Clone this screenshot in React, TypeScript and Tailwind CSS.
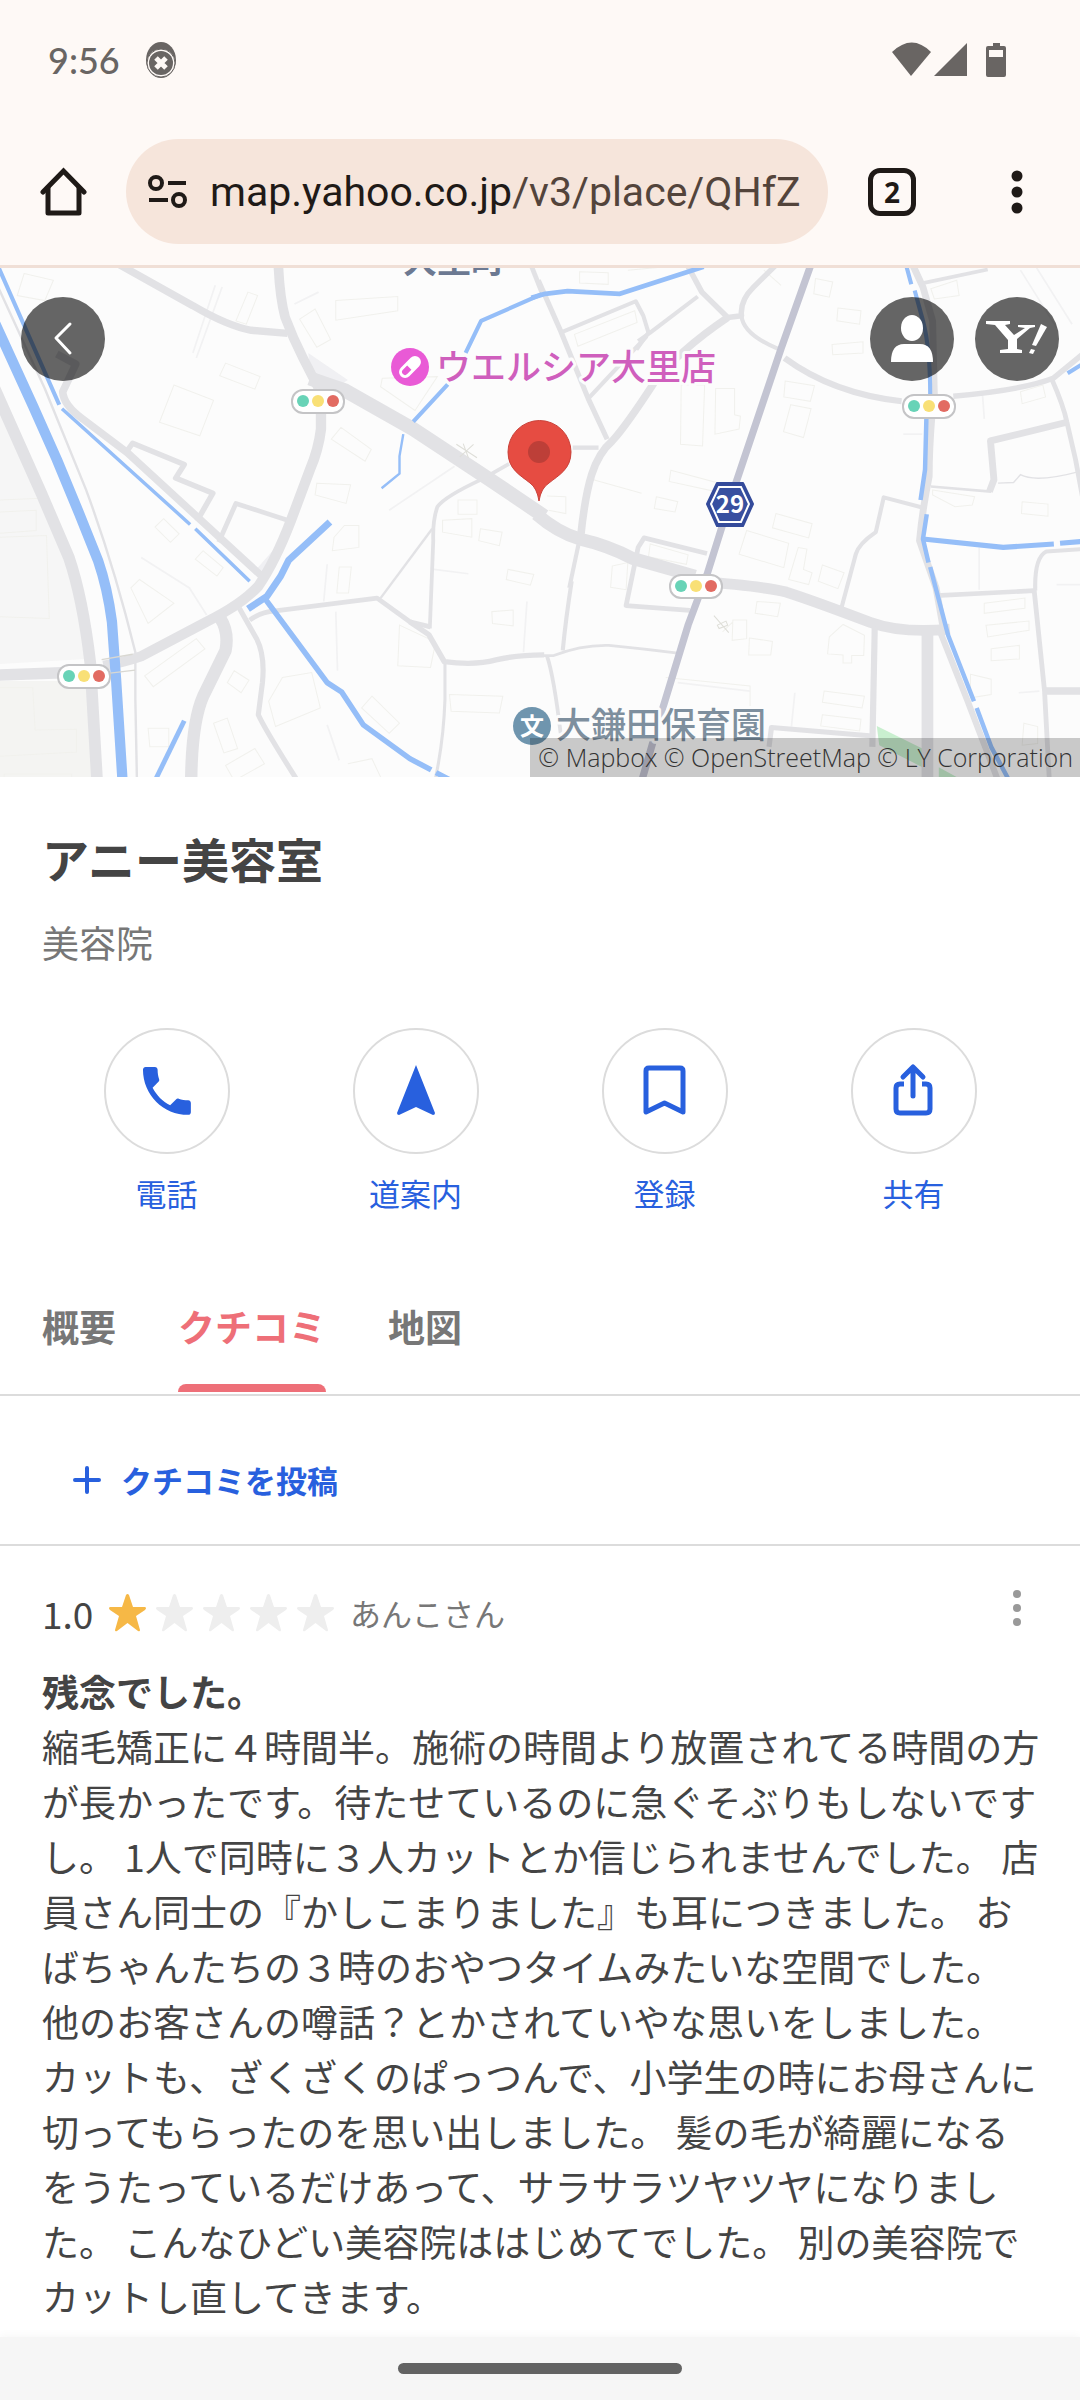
import React from "react";

const jp = "font-['Noto_Sans_CJK_JP',sans-serif]";

const review = [
  "縮毛矯正に４時間半。施術の時間より放置されてる時間の方",
  "が長かったです。待たせているのに急ぐそぶりもしないです",
  "し。 1人で同時に３人カットとか信じられませんでした。 店",
  "員さん同士の『かしこまりました』も耳につきました。 お",
  "ばちゃんたちの３時のおやつタイムみたいな空間でした。",
  "他のお客さんの噂話？とかされていやな思いをしました。",
  "カットも、ざくざくのぱっつんで、小学生の時にお母さんに",
  "切ってもらったのを思い出しました。 髪の毛が綺麗になる",
  "をうたっているだけあって、サラサラツヤツヤになりまし",
  "た。 こんなひどい美容院ははじめてでした。 別の美容院で",
  "カットし直してきます。",
].join("\n");

type Line = [string, number];

const westRoads: Line[] = [
  ["M340 10L560 135Q660 195 730 208L835 217", 22],
  ["M808 10Q812 110 828 170Q850 230 880 290L925 380", 28],
  ["M932 400V500Q925 560 900 620L845 770Q800 890 750 965Q700 1020 600 1070L410 1172Q360 1190 300 1200", 30],
  ["M900 350Q940 365 1000 385L1200 500L1420 648L1580 758", 42],
  ["M-20 370L120 690L200 880Q240 1000 262 1190L283 1560", 34],
  ["M-10 1228L200 1220", 34],
  ["M-10 70L130 380L250 680Q330 900 393 1160V1300L398 1560", 7],
  ["M165 278L220 308L182 390Q185 430 240 470L370 570L760 935", 22],
  ["M365 570L385 542L535 605L510 645L618 690L572 772", 16],
  ["M635 835L685 720L835 770", 14],
  ["M640 1060Q665 1100 655 1155L590 1290Q555 1370 555 1560", 36],
  ["M695 1030L745 1120Q770 1170 762 1250L750 1345Q770 1390 870 1550", 15],
  ["M725 1065Q760 1040 800 1038L1095 1000L1190 1070L1250 1085", 14],
  ["M1190 1070L1245 1108L1290 1188Q1380 1200 1440 1183Q1500 1168 1580 1168", 16],
  ["M1292 1190V1300Q1288 1420 1265 1530", 9],
  ["M1478 603L1400 648Q1290 700 1270 730Q1256 770 1258 830L1248 1090", 11],
  ["M1255 795L1105 1000", 7],
  ["M1540 10L1575 100", 14],
];

const westRivers: Line[] = [
  ["M-15 185L95 430L165 590L230 750L285 890Q312 970 325 1070L337 1240L357 1560", 30],
  ["M-5 20L60 170L172 428", 12],
  ["M180 440L552 782M567 795L725 950", 10],
  ["M958 775L838 888L815 935L775 995L720 1032", 20],
  ["M772 1005L950 1250L992 1278L1055 1375L1190 1475L1252 1508M1266 1516L1320 1545", 16],
  ["M535 1363L450 1540", 14],
  ["M1585 96L1397 180L1352 275M1300 368L1200 478", 12],
  ["M1171 515L1160 580V632L1108 675", 7],
];

const eastRoads: Line[] = [
  ["M-10 752Q50 805 115 825Q200 845 270 883L450 935", 38],
  ["M450 950Q650 965 715 982Q800 1010 960 1072Q1050 1105 1190 1092", 32],
  ["M112 840L85 970M92 950Q75 1060 66 1155", 12],
  ["M-10 1170H40Q120 1138 200 1140Q300 1150 400 1163", 8],
  ["M20 1170Q40 1230 60 1400", 11],
  ["M118 820Q130 700 150 635Q170 570 210 535Q250 490 330 365Q400 270 545 170", 22],
  ["M-5 60L60 210L140 410L195 530", 15],
  ["M60 215L278 122L300 165L315 215L280 265", 12],
  ["M285 240L320 215L458 108M140 410L310 225", 12],
  ["M95 555L170 555", 13],
  ["M425 10L470 95L545 170L585 165Q580 120 620 80L685 15", 16],
  ["M585 165Q590 220 690 262", 12],
  ["M710 290Q850 395 1050 418", 18],
  ["M1200 403Q1400 385 1490 350L1580 275", 16],
  ["M1080 10L1112 80L1140 180L1145 400", 20],
  ["M1138 460Q1130 560 1130 640Q1110 740 1102 830L1150 970L1172 1095", 20],
  ["M1105 70L1300 28", 11],
  ["M1485 350Q1520 430 1530 480L1555 590L1575 700", 14],
  ["M1530 480L1308 535L1318 650L1305 685", 20],
  ["M1310 685L1135 670", 8],
  ["M1110 732L998 702L975 805Q925 840 917 870L875 1030", 12],
  ["M1150 993L1435 978L1465 1275L1480 1560", 14],
  ["M1438 978Q1435 880 1470 862L1580 855", 12],
  ["M1465 1275H1580", 22],
  ["M485 868L302 822L285 850L250 1022L435 1036", 14],
  ["M972 1085L965 1440", 18],
  ["M665 1440L672 1383L965 1408", 15],
  ["M1125 1095V1560", 34],
  ["M1160 1095L1240 1300L1330 1540", 18],
];

const eastRivers: Line[] = [
  ["M-25 112L15 100L80 92L232 100L475 20", 14],
  ["M1063 15L1078 72M1088 90L1112 180Q1133 260 1133 400", 12],
  ["M1122 465L1118 620L1105 710M1123 752L1112 825L1128 895", 13],
  ["M1112 825L1345 850L1492 840M1510 838L1580 832", 15],
  ["M1133 908L1185 1110L1260 1305M1268 1325L1310 1440L1365 1545", 13],
  ["M1532 335L1580 305", 12],
];

const westHouses =
  "M70 40L155 60L130 120L50 105ZM720 95L748 105L715 190L685 180ZM655 305L755 345L740 382L638 342ZM505 370L620 415L580 520L463 480ZM870 175L915 145L960 235L920 258ZM975 120L1155 108V150L975 178ZM990 495L1078 560L1060 595L962 530ZM920 660L1018 665L1005 720L915 695ZM1110 350L1270 345L1205 445L1105 375ZM475 765L520 810L495 835L450 790ZM590 860L648 910L630 935L567 885ZM405 945L505 1015L430 1075L380 970ZM1330 710H1385V752H1330ZM1285 770L1370 765V820L1285 805ZM1395 795L1458 805L1450 845L1390 830ZM985 908H1020L1012 985H978ZM970 820L1000 785H1042V850L965 860ZM1475 915L1550 930L1540 962L1470 945ZM1428 1040L1490 1035V1082L1430 1075ZM1160 1080L1265 1130L1250 1205L1155 1200ZM1305 1285L1460 1290L1450 1340L1310 1335ZM1080 1290L1160 1370L1130 1400L1050 1325ZM820 1235L905 1220L930 1325L800 1380L780 1305ZM680 1215L723 1243L700 1280L660 1250ZM420 1230L570 1120L595 1150L445 1262ZM430 1385H490V1440H435ZM620 1370L660 1355L690 1445L650 1458ZM655 1495L740 1445L768 1490L680 1540ZM1010 1490L1080 1475L1110 1540M0 745L105 740V800L0 808M0 820L135 815L143 1060L0 1055M0 710L120 705M0 1265H95L102 1390L222 1388V1455L0 1468M12 1530V1520H208V1540";
const eastHouses =
  "M115 35L198 38V72L115 68ZM100 220L275 150L282 185L110 255ZM800 55L850 65L840 110L795 100ZM865 142L932 150L928 190L862 180ZM848 250L938 242V275L850 280ZM712 358L797 372L785 418L708 405ZM728 428L787 440L765 525L707 508ZM410 370H478L472 550L408 545ZM510 380H565V458L582 462L578 500L508 515ZM380 622L520 660L510 685L375 655ZM338 700L400 715L392 745L332 735ZM20 698L75 700V750L25 740M685 750L790 780L780 822L675 792ZM600 800L722 838L708 910L578 870ZM320 840L430 872L425 900L315 878ZM750 850L775 855L765 915L790 925L780 960L722 945ZM820 902L883 925L865 972L808 950ZM210 905L255 895L250 975L205 968ZM630 1010L698 1015L690 1055L625 1045ZM560 1065H600V1120L558 1125ZM608 1118L675 1128L670 1168H606ZM840 1115L880 1078L942 1110L940 1170H905V1192H880V1168L835 1165ZM1290 1015L1408 1000V1030L1290 1045ZM1295 1080L1420 1068V1095L1300 1115ZM1310 1150L1392 1140V1180L1310 1185ZM825 1275L942 1290L935 1325L820 1308ZM820 1345L932 1358L928 1393L815 1378ZM1135 85L1210 60L1217 105L1145 115ZM1395 390L1460 370L1468 405L1400 425ZM1400 715L1475 722V758L1398 750ZM1140 680L1262 700L1255 725L1205 730L1140 695ZM1250 1225L1310 1240V1285L1250 1295ZM1405 1370L1445 1380V1430L1400 1435ZM255 30L480 10M700 75L650 30M365 1235L610 1260V1320M530 1100L560 1070M155 650L295 690";

function Roads({ lines, color }: { lines: Line[]; color: string }) {
  return (
    <g fill="none" stroke={color} strokeLinejoin="round">
      {lines.map(([d, w]) => (
        <path key={d} d={d} strokeWidth={w} />
      ))}
    </g>
  );
}

function Signal({ x, y }: { x: number; y: number }) {
  return (
    <g>
      <rect x={x - 26} y={y - 11} width="52" height="23" rx="11" fill="#fff" stroke="#c4c4c6" strokeWidth="2" />
      <circle cx={x - 15} cy={y} r="6" fill="#68d3b7" />
      <circle cx={x} cy={y} r="6" fill="#f9e076" />
      <circle cx={x + 15} cy={y} r="6" fill="#e26b62" />
    </g>
  );
}

function MapView() {
  return (
    <svg
      viewBox="0 0 1080 509"
      preserveAspectRatio="xMidYMid slice"
      className="block h-[509px] w-full bg-[#fcfcfc]"
      role="img"
      aria-label="アニー美容室周辺の地図"
    >
      <g transform="translate(0 -8) scale(.3444 .3381)">
        <path d="M0 400L120 700L200 890L250 1180L0 1195Z" fill="#f6f6f6" />
        <path d="M0 1245H258L275 1560H0Z" fill="#f4f4f2" />
        <path d={westHouses} fill="none" stroke="#f1f1ed" strokeWidth="3" />
        <path d="M645 80L570 290M625 75L560 275M925 95L855 130M1130 740L1320 610M410 880L550 970L600 1050M950 900L940 1010M975 1040L980 1215M1260 915L1360 928M1530 1010L1520 1160M950 1375L985 1480" fill="none" stroke="#f2f2f3" strokeWidth="5" />
        <path d="M895 275L1010 355L980 375L905 355ZM740 920L800 850L775 940Z" fill="#f0f0f3" />
        <Roads lines={westRoads} color="#e2e2e5" />
        <Roads lines={westRivers} color="#95bef8" />
        <path d="M295 1182L385 1166M320 1222L392 1213" stroke="#d9d8d2" strokeWidth="4" />
        <path d="M1325 545L1385 585M1375 545L1335 582M1345 543L1360 585" stroke="#deded8" strokeWidth="3" />
      </g>
      <g transform="translate(540 -8) scale(.3444 .3381)">
        <path d={eastHouses} fill="none" stroke="#f1f1ed" strokeWidth="3" />
        <path d="M1395 30L1500 200M1440 20L1545 190M1275 850V975M1285 400L1290 470M1500 960H1568M1390 1280L1450 1275M740 1280L730 1380M400 1250L610 1275M1055 515H1110" fill="none" stroke="#f2f2f3" strokeWidth="5" />
        <path d="M978 1378L1110 1445V1500L985 1435ZM1158 1500L1220 1535H1158Z" fill="#c9efcf" />
        <Roads lines={eastRoads} color="#e2e2e5" />
        <path d="M1330 660L1375 658L1395 635Q1440 660 1568 625" fill="none" stroke="#e2e2e5" strokeWidth="4" />
        <Roads lines={eastRivers} color="#95bef8" />
        <path d="M788 10L700 262L562 680L485 930L430 1080L355 1330L290 1560" fill="none" stroke="#c3c4d2" strokeWidth="21" />
        <path d="M505 1052L548 1102M515 1080L540 1068L545 1080L520 1090Z" fill="none" stroke="#deded8" strokeWidth="3" />
      </g>

      <Signal x={318} y={133} />
      <Signal x={84} y={408} />
      <Signal x={929} y={138} />
      <Signal x={696} y={318} />

      <g className="font-['Noto_Sans_CJK_JP',sans-serif]" paintOrder="stroke" stroke="#fcfcfc" strokeWidth="6" strokeLinejoin="round">
        <text x="403" y="5" fontSize="34" fontWeight="700" fill="#6c7992">大里町</text>
        <text x="436" y="112" fontSize="35" fontWeight="500" fill="#cf5fbd">ウエルシア大里店</text>
        <text x="556" y="470" fontSize="35" fontWeight="500" fill="#7e8f9e">大鎌田保育園</text>
      </g>

      <circle cx="410" cy="99" r="19" fill="#e95ad6" />
      <g transform="translate(410 99) rotate(-45)">
        <rect x="-12" y="-5" width="24" height="10" rx="5" fill="#fff" stroke="#fff" strokeWidth="2" />
        <path d="M-1 -3H-7A3 3 0 0 0 -7 3H-1Z" fill="#e95ad6" />
      </g>
      <circle cx="532" cy="458" r="19" fill="#6f95ae" />
      <text x="532" y="467" textAnchor="middle" fontSize="24" fontWeight="700" fill="#fff" className="font-['Noto_Sans_CJK_JP',sans-serif]">文</text>

      <path d="M707 236L717 215H743L753 236L743 258H717Z" fill="#344b9b" stroke="#344b9b" strokeWidth="2" strokeLinejoin="round" />
      <path d="M711 236L719 219H741L749 236L741 254H719Z" fill="#3850a0" stroke="#fff" strokeWidth="2" />
      <text x="730" y="245" textAnchor="middle" fontSize="24" fontWeight="600" fill="#fff" className="font-['Noto_Sans_CJK_JP',sans-serif]">29</text>

      <path d="M539 233Q537 220 530 215C520 207 508 201 508 184A31 31 0 0 1 571 184C571 201 559 207 549 215Q541 220 539 233Z" fill="#e64c42" stroke="#c9423a" strokeWidth="1" />
      <circle cx="539" cy="184" r="11" fill="#bd3f38" />
    </svg>
  );
}

function StatusBar() {
  return (
    <div className="flex h-[120px] items-center justify-between pl-12 pr-[73px] text-[#696563]">
      <div className="flex items-center gap-[26px]">
        <span className="font-[Lato,sans-serif] text-[36px] font-medium leading-[48px]">9:56</span>
        <svg width="30" height="37" viewBox="0 0 30 37" aria-hidden="true">
          <ellipse cx="15" cy="18" rx="15" ry="18" fill="#696563" />
          <circle cx="15" cy="21" r="14" fill="#fef9f6" />
          <ellipse cx="15" cy="21" rx="14" ry="14" fill="none" stroke="#696563" strokeWidth="1" />
          <circle cx="15" cy="21" r="12" fill="#696563" />
          <path d="M10 16L20 26M20 16L10 26" stroke="#fef9f6" strokeWidth="5" />
        </svg>
      </div>
      <svg width="115" height="36" viewBox="0 0 115 36" fill="currentColor" aria-hidden="true">
        <path d="M0 10Q20 -9 39 10L19 34Z" />
        <path d="M75 1V34H42Z" />
        <path d="M101 1H108V4H112Q114 4 114 6V33Q114 35 112 35H96Q94 35 94 33V6Q94 4 96 4H101Z" />
        <path d="M97 8H111V15H97Z" fill="#fef9f6" />
      </svg>
    </div>
  );
}

function Toolbar() {
  return (
    <div className="flex items-center border-b-[3px] border-[#f0dfd6] pb-[21px] pl-10 pr-[57px] pt-[19px] text-[#1f1a17]">
      <button type="button" aria-label="ホーム" className="shrink-0">
        <svg width="47" height="50" viewBox="0 0 47 50" fill="none" stroke="currentColor" strokeWidth="5" strokeLinecap="round" strokeLinejoin="round">
          <path d="M3 25L23.500 4L44 25" strokeLinejoin="miter" />
          <path d="M8 21V46H39V21" />
        </svg>
      </button>
      <div className="ml-[39px] flex h-[105px] min-w-0 flex-1 items-center rounded-full bg-[#f6e5db] pl-[22px] pr-4">
        <button type="button" aria-label="サイト情報" className="shrink-0">
          <svg width="40" height="34" viewBox="0 0 40 34" fill="none" stroke="currentColor" strokeWidth="4">
            <circle cx="8" cy="8" r="6" />
            <path d="M20 8H38M1 25H20" />
            <circle cx="31" cy="25" r="6" />
          </svg>
        </button>
        <a href="https://map.yahoo.co.jp/v3/place/QHfZ" className="ml-[22px] overflow-hidden whitespace-nowrap font-[Roboto,sans-serif] text-[41px] leading-[56px] text-[#53443b]">
          <span className="text-[#1f1a17]">map.yahoo.co.jp</span>/v3/place/QHfZ
        </a>
      </div>
      <button type="button" aria-label="タブ 2 件" className="ml-10 flex size-12 shrink-0 items-center justify-center rounded-xl border-[5px] border-current font-['Noto_Sans',sans-serif] text-[28px] font-bold leading-none">
        2
      </button>
      <button type="button" aria-label="メニュー" className="ml-[95px] shrink-0">
        <svg width="12" height="44" viewBox="0 0 12 44" fill="currentColor">
          <circle cx="6" cy="6" r="5.500" />
          <circle cx="6" cy="22" r="5.500" />
          <circle cx="6" cy="38" r="5.500" />
        </svg>
      </button>
    </div>
  );
}

const round = "flex size-[84px] items-center justify-center rounded-full bg-black/60 text-white";

const actions = [
  {
    label: "電話",
    icon: (
      <path
        transform="translate(-4 -4) scale(2.660)"
        d="M6.620 10.790c1.440 2.830 3.760 5.140 6.590 6.590l2.200-2.200c.27-.27.67-.36 1.020-.24 1.120.37 2.330.57 3.570.57.55 0 1 .45 1 1V20c0 .55-.45 1-1 1-9.390 0-17-7.610-17-17 0-.55.45-1 1-1h3.500c.55 0 1 .45 1 1 0 1.250.2 2.450.57 3.570.11.35.03.74-.25 1.020l-2.200 2.200z"
        fill="currentColor"
      />
    ),
  },
  {
    label: "道案内",
    icon: <path d="M28 2L47 50Q47 52 45 52L28 44L11 52Q9 52 9 50Z" fill="currentColor" />,
  },
  {
    label: "登録",
    icon: <path d="M9 49V8Q9 5 12 5H43Q46 5 46 8V49L27.500 40Z" fill="none" stroke="currentColor" strokeWidth="5" strokeLinejoin="round" />,
  },
  {
    label: "共有",
    icon: (
      <g fill="none" stroke="currentColor" strokeWidth="5" strokeLinejoin="round">
        <path d="M18 21H14Q10 21 10 25V46Q10 50 14 50H40Q44 50 44 46V25Q44 21 40 21H36" />
        <path d="M27 33V5M17 14L27 4L37 14" strokeLinecap="round" />
      </g>
    ),
  },
];

const tabs = ["概要", "クチコミ", "地図"];

export default function App() {
  return (
    <div className={`flex min-h-screen flex-col bg-white text-[#444] ${jp}`}>
      <header className="bg-[#fef9f6]">
        <StatusBar />
        <Toolbar />
      </header>

      <section className="relative">
        <MapView />
        <div className="absolute inset-x-[21px] top-[29px] flex justify-between">
          <button type="button" aria-label="戻る" className={round}>
            <svg width="84" height="84" viewBox="0 0 84 84" fill="none" stroke="currentColor" strokeWidth="3" strokeLinecap="round" strokeLinejoin="round">
              <path d="M49 27L35 41L49 56" />
            </svg>
          </button>
          <div className="flex gap-[21px]">
            <button type="button" aria-label="アカウント" className={round}>
              <svg width="84" height="84" viewBox="0 0 84 84" fill="currentColor">
                <ellipse cx="42" cy="31" rx="11" ry="13" />
                <path d="M21 65Q21 47 34 47H50Q63 47 63 65Z" />
              </svg>
            </button>
            <a href="https://www.yahoo.co.jp/" aria-label="Yahoo! JAPAN" className={round}>
              <svg width="84" height="84" viewBox="0 0 84 84" fill="currentColor">
                <path d="M11 24H35V27L30 28L39 38L50 31L43 30V28H60V30L55 31L42 42V52L47 53V56H25V53L33 52V43L20 28L11 27Z" />
                <path d="M66 27L72 30L61 49L57 48Z" />
                <path d="M56 52L60 53L58 57L54 56Z" />
              </svg>
            </a>
          </div>
        </div>
        <p className="absolute bottom-0 right-0 flex h-[39px] items-center whitespace-nowrap bg-black/20 pl-2 pr-[7px] font-['Open_Sans',sans-serif] text-[25px] font-light leading-[39px] text-[#333]">
          © Mapbox © OpenStreetMap © LY Corporation
        </p>
      </section>

      <main className="grow pb-[13px]">
        <div className="px-[42px] pt-[53px]">
          <h1 className="text-[47px] font-bold leading-[56px]">アニー美容室</h1>
          <p className="mt-8 text-[37px] leading-[48px] text-[#777]">美容院</p>
          <div className="mt-[62px] grid grid-cols-4 text-[#2860de]">
            {actions.map((a) => (
              <button key={a.label} type="button" className="flex flex-col items-center gap-[19px]">
                <span className="flex size-[126px] items-center justify-center rounded-full border-2 border-[#dcdcdc]">
                  <svg width="56" height="56" viewBox="0 0 56 56" aria-hidden="true">
                    {a.icon}
                  </svg>
                </span>
                <span className="text-[31px] leading-[40px]">{a.label}</span>
              </button>
            ))}
          </div>
        </div>

        <nav className="mt-[89px] flex gap-[62px] border-b-2 border-[#dcdcdc] px-[42px] pb-[2px]">
          {tabs.map((t) => (
            <button key={t} type="button" className="group flex flex-col gap-[34px] text-[37px] font-bold leading-[48px] text-[#777] aria-[current=page]:text-[#ee6f78]" aria-current={t === "クチコミ" ? "page" : undefined}>
              {t}
              <span className="h-2 w-full rounded-t-lg group-aria-[current=page]:bg-[#ee6f78]" />
            </button>
          ))}
        </nav>

        <div className="border-b-2 border-[#dcdcdc] px-[73px] pb-10 pt-[60px]">
          <button type="button" className="flex items-center gap-5 text-[31px] font-bold leading-[48px] text-[#2860de]">
            <svg width="28" height="28" viewBox="0 0 28 28" stroke="currentColor" strokeWidth="4" strokeLinecap="round" aria-hidden="true">
              <path d="M14 2V26M2 14H26" />
            </svg>
            クチコミを投稿
          </button>
        </div>

        <article className="px-[42px] pt-[43px]">
          <div className="flex items-center justify-between">
            <div className="flex items-center">
              <span className="w-[67px] text-[37px] leading-[48px]">1.0</span>
              <span className="flex gap-[10px]" role="img" aria-label="5点中1点">
                {[0, 1, 2, 3, 4].map((i) => (
                  <svg key={i} width="37" height="38" viewBox="0 0 37 38" fill={i === 0 ? "#f6b846" : "#eeeeee"}>
                    <path d="M17 1Q18.500 -1 20 1L24 13H36Q38 14 36 16L27 22L31 36Q31 38 29 37L18.500 29L8 37Q6 38 6 36L10 22L1 16Q-1 14 1 13H13Z" />
                  </svg>
                ))}
              </span>
              <span className="ml-4 text-[31px] leading-[48px] text-[#777]">あんこさん</span>
            </div>
            <button type="button" aria-label="その他" className="mr-4 self-start text-[#999]">
              <svg width="10" height="38" viewBox="0 0 10 38" fill="currentColor">
                <circle cx="5" cy="5" r="4" />
                <circle cx="5" cy="19" r="4" />
                <circle cx="5" cy="33" r="4" />
              </svg>
            </button>
          </div>
          <h2 className="mt-[27px] text-[37px] font-bold leading-[55px]">残念でした。</h2>
          <p className="-mr-6 whitespace-pre-line text-[37px] leading-[55px]">{review}</p>
        </article>
      </main>

      <footer className="flex h-[63px] justify-center bg-[#f6f6f6] pt-[26px] shadow-[0_-2px_8px_rgba(0,0,0,0.03)]">
        <div className="h-[11px] w-[284px] rounded-full bg-[#636363]" />
      </footer>
    </div>
  );
}
